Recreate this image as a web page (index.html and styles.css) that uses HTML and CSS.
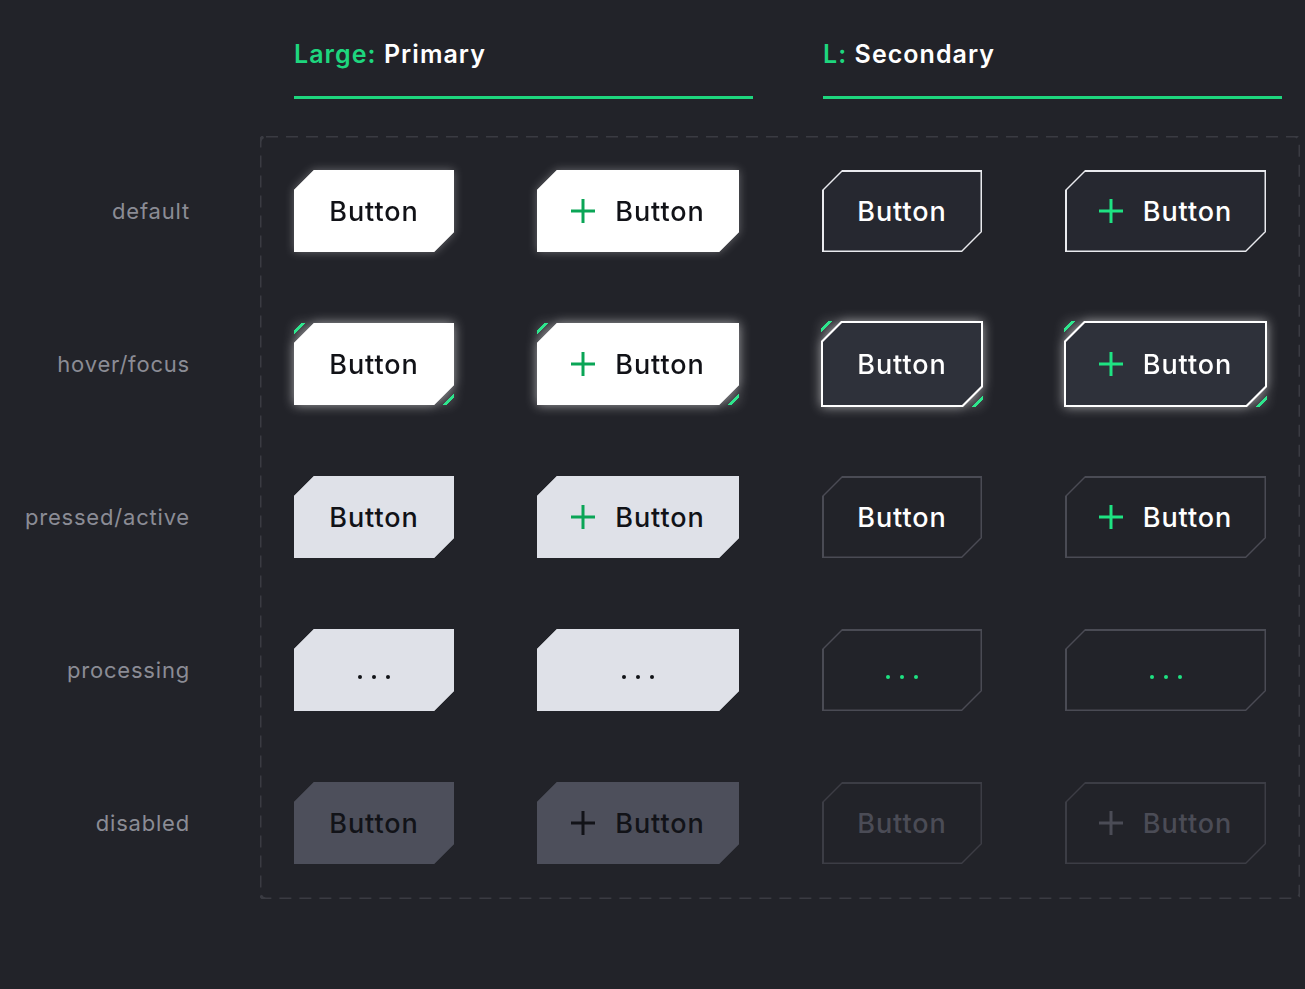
FILE: index.html
```html
<!DOCTYPE html>
<html lang="en">
<head>
<meta charset="utf-8">
<title>Large buttons</title>
<link rel="stylesheet" href="styles.css">
</head>
<body>
<div class="page">
  <header class="heads">
    <div class="head">
      <h2 class="title"><span class="accent">Large:</span> Primary</h2>
      <div class="rule"></div>
    </div>
    <div class="head">
      <h2 class="title"><span class="accent">L:</span> Secondary</h2>
      <div class="rule"></div>
    </div>
  </header>

  <div class="matrix">
    <ul class="labels">
      <li>default</li>
      <li>hover/focus</li>
      <li>pressed/active</li>
      <li>processing</li>
      <li>disabled</li>
    </ul>

    <div class="board">
      <!-- default -->
      <div class="btn pri glow"><div class="face"><div class="inner"><span class="txt">Button</span></div></div></div>
      <div class="btn pri glow"><div class="face"><div class="inner"><svg class="plus" viewBox="0 0 24 24"><path d="M12 0v24M0 12h24"/></svg><span class="txt">Button</span></div></div></div>
      <div class="btn sec"><div class="face"><div class="inner"><span class="txt">Button</span></div></div></div>
      <div class="btn sec"><div class="face"><div class="inner"><svg class="plus" viewBox="0 0 24 24"><path d="M12 0v24M0 12h24"/></svg><span class="txt">Button</span></div></div></div>

      <!-- hover -->
      <div class="btn pri glow-strong hover"><div class="face"><div class="inner"><span class="txt">Button</span></div></div></div>
      <div class="btn pri glow-strong hover"><div class="face"><div class="inner"><svg class="plus" viewBox="0 0 24 24"><path d="M12 0v24M0 12h24"/></svg><span class="txt">Button</span></div></div></div>
      <div class="btn sec sec-hover glow-strong hover"><div class="face"><div class="inner"><span class="txt">Button</span></div></div></div>
      <div class="btn sec sec-hover glow-strong hover"><div class="face"><div class="inner"><svg class="plus" viewBox="0 0 24 24"><path d="M12 0v24M0 12h24"/></svg><span class="txt">Button</span></div></div></div>

      <!-- pressed -->
      <div class="btn pri pressed"><div class="face"><div class="inner"><span class="txt">Button</span></div></div></div>
      <div class="btn pri pressed"><div class="face"><div class="inner"><svg class="plus" viewBox="0 0 24 24"><path d="M12 0v24M0 12h24"/></svg><span class="txt">Button</span></div></div></div>
      <div class="btn sec sec-pressed"><div class="face"><div class="inner"><span class="txt">Button</span></div></div></div>
      <div class="btn sec sec-pressed"><div class="face"><div class="inner"><svg class="plus" viewBox="0 0 24 24"><path d="M12 0v24M0 12h24"/></svg><span class="txt">Button</span></div></div></div>

      <!-- processing -->
      <div class="btn pri pressed"><div class="face"><div class="inner"><span class="dots"><i></i><i></i><i></i></span></div></div></div>
      <div class="btn pri pressed"><div class="face"><div class="inner"><span class="dots"><i></i><i></i><i></i></span></div></div></div>
      <div class="btn sec sec-pressed"><div class="face"><div class="inner"><span class="dots green"><i></i><i></i><i></i></span></div></div></div>
      <div class="btn sec sec-pressed"><div class="face"><div class="inner"><span class="dots green"><i></i><i></i><i></i></span></div></div></div>

      <!-- disabled -->
      <div class="btn pri disabled"><div class="face"><div class="inner"><span class="txt">Button</span></div></div></div>
      <div class="btn pri disabled"><div class="face"><div class="inner"><svg class="plus" viewBox="0 0 24 24"><path d="M12 0v24M0 12h24"/></svg><span class="txt">Button</span></div></div></div>
      <div class="btn sec sec-disabled"><div class="face"><div class="inner"><span class="txt">Button</span></div></div></div>
      <div class="btn sec sec-disabled"><div class="face"><div class="inner"><svg class="plus" viewBox="0 0 24 24"><path d="M12 0v24M0 12h24"/></svg><span class="txt">Button</span></div></div></div>
    </div>
  </div>
</div>
</body>
</html>
```

FILE: styles.css
```css
* { box-sizing: border-box; }

html, body {
  margin: 0;
  padding: 0;
  background: #222329;
}

body {
  font-family: Inter, "Noto Sans", "Liberation Sans", sans-serif;
  color: #ffffff;
  overflow: hidden;
}

.page {
  width: 1305px;
  height: 989px;
}

/* ---------- headers ---------- */
.heads {
  display: flex;
  gap: 70px;
  padding: 39px 0 0 294px;
}

.head {
  width: 459px;
}

.title {
  margin: 0;
  font-size: 25px;
  line-height: 30px;
  font-weight: 600;
  color: #ffffff;
  letter-spacing: 1.05px;
}

.accent {
  color: #1ed67e;
}

.rule {
  margin-top: 27px;
  height: 3px;
  background: #1ed67e;
}

/* ---------- matrix ---------- */
.matrix {
  display: flex;
  gap: 70px;
  margin-top: 37px;
}

.labels {
  list-style: none;
  margin: 0;
  padding: 34px 0 0 0;
  width: 190px;
  display: flex;
  flex-direction: column;
  gap: 71px;
}

.labels li {
  height: 82px;
  display: flex;
  align-items: center;
  justify-content: flex-end;
  font-size: 22px;
  font-weight: 400;
  color: #8b8c95;
  letter-spacing: 0.8px;
}

.board {
  width: 1040px;
  height: 763px;
  padding: 34px;
  display: grid;
  grid-template-columns: 160px 202px 160px 201px;
  grid-auto-rows: 82px;
  column-gap: 83px;
  row-gap: 71px;
  align-items: center;
  background-image: url("data:image/svg+xml,%3csvg xmlns='http://www.w3.org/2000/svg' width='100%25' height='100%25'%3e%3crect width='100%25' height='100%25' fill='none' rx='6' ry='6' stroke='%233a3b42' stroke-width='3' stroke-dasharray='12%2c 8'/%3e%3c/svg%3e");
}

/* ---------- buttons ---------- */
.btn {
  --bc: #ffffff;
  --bw: 0px;
  --fill: #ffffff;
  --ink: #111217;
  --plus: #0aa556;
  position: relative;
  height: 82px;
}

.face {
  height: 100%;
  padding: var(--bw);
  background: var(--bc);
  clip-path: polygon(20px 0, 100% 0, 100% calc(100% - 20px), calc(100% - 20px) 100%, 0 100%, 0 20px);
}

.inner {
  height: 100%;
  background: var(--fill);
  clip-path: polygon(19px 0, 100% 0, 100% calc(100% - 19px), calc(100% - 19px) 100%, 0 100%, 0 19px);
  display: flex;
  align-items: center;
  justify-content: center;
  gap: 20px;
}

.txt {
  font-size: 27px;
  font-weight: 500;
  color: var(--ink);
  line-height: 1;
  letter-spacing: 0.9px;
}

.plus {
  width: 24px;
  height: 24px;
  flex: none;
}

.plus path {
  stroke: var(--plus);
  stroke-width: 3;
  fill: none;
}

.dots {
  display: flex;
  gap: 10px;
  margin-top: 14px;
}

.dots i {
  width: 4px;
  height: 4px;
  border-radius: 50%;
  background: #111217;
}

.dots.green i {
  background: #1ee382;
}

/* primary variants */
.glow {
  filter: drop-shadow(0 0 5px rgba(255, 255, 255, 0.32));
}

.glow-strong {
  filter: drop-shadow(0 0 6px rgba(255, 255, 255, 0.6));
}

.pressed {
  --bc: #dfe1e8;
  --fill: #dfe1e8;
}

.disabled {
  --bc: #4d4f5b;
  --fill: #4d4f5b;
  --ink: #121318;
  --plus: #121318;
}

/* secondary variants */
.sec {
  --bc: #e9eaee;
  --bw: 1.5px;
  --fill: #262830;
  --ink: #ffffff;
  --plus: #1ee382;
}

.sec-hover {
  --bc: #ffffff;
  --bw: 2px;
  --fill: #2e313a;
  height: 86px;
  margin: 0 -1px;
}

.sec-pressed {
  --bc: #4a4b54;
  --fill: #222329;
}

.sec-disabled {
  --bc: #3c3d45;
  --fill: #222329;
  --ink: #4b4c56;
  --plus: #4b4c56;
}

/* hover accents */
.hover::before,
.hover::after {
  content: "";
  position: absolute;
  width: 14px;
  height: 14px;
  pointer-events: none;
}

.hover::before {
  top: 0;
  left: 0;
  background: linear-gradient(135deg, transparent 0 27%, #2ee68d 27% 42%, transparent 42%);
}

.hover::after {
  bottom: 0;
  right: 0;
  background: linear-gradient(315deg, transparent 0 27%, #2ee68d 27% 42%, transparent 42%);
}
```
